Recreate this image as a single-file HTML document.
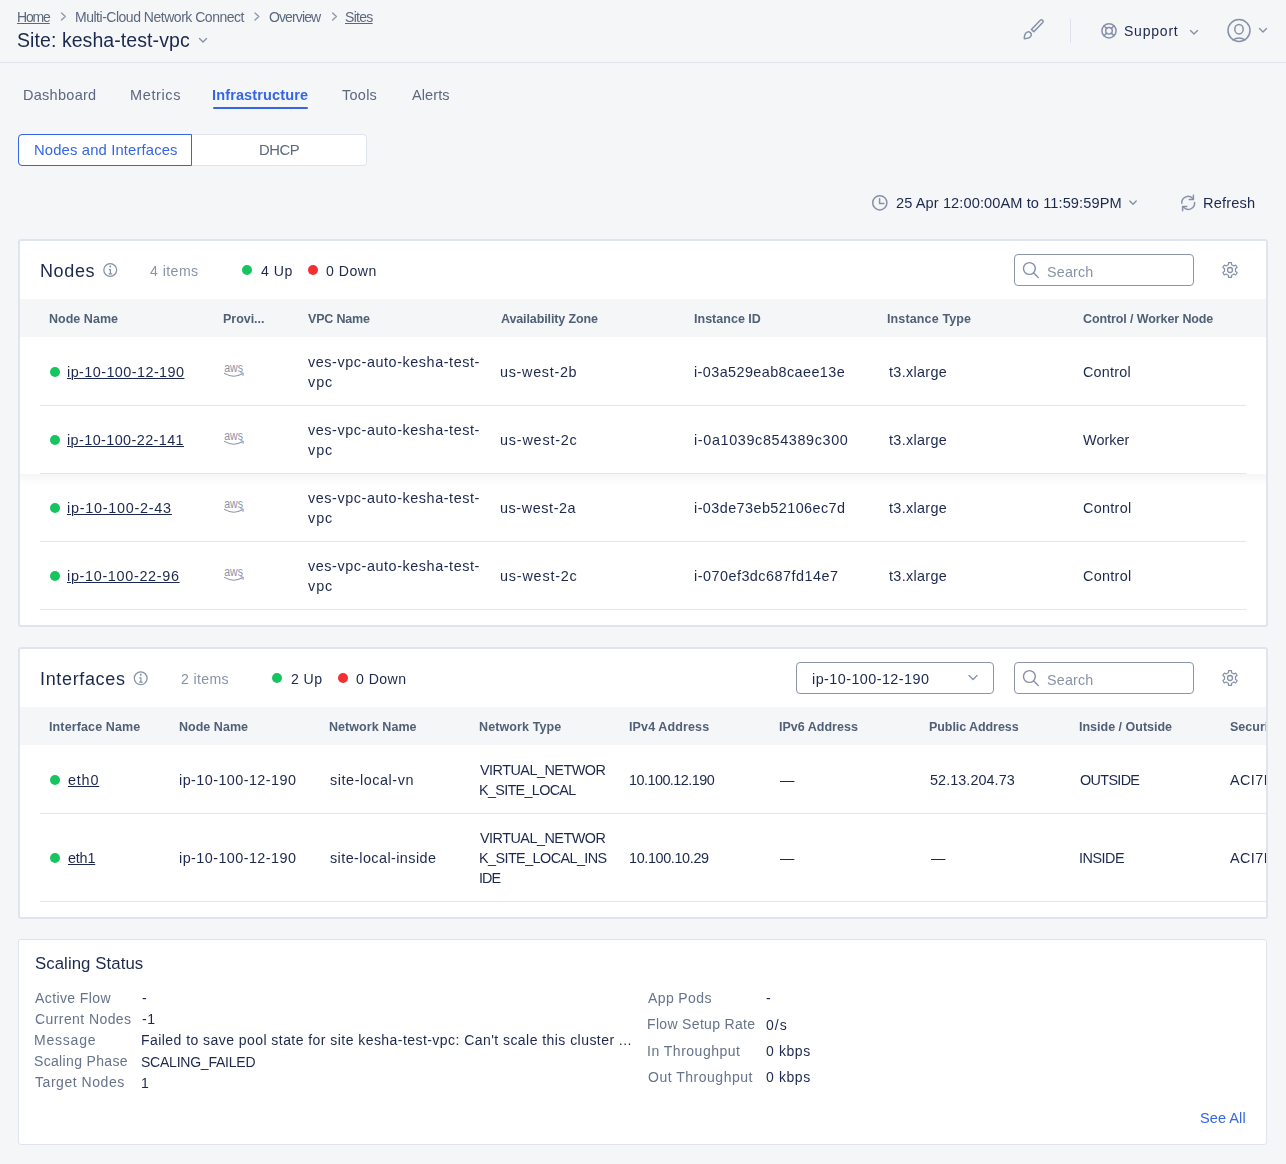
<!DOCTYPE html>
<html><head><meta charset="utf-8">
<style>
*{box-sizing:border-box;margin:0;padding:0}
html,body{width:1286px;height:1164px;overflow:hidden;background:#f5f6f8;font-family:"Liberation Sans",sans-serif}
.t{position:absolute;white-space:pre;line-height:20px;will-change:transform}
.b{position:absolute}
.card{position:absolute;background:#fff;border:2px solid #e0e4ee;border-radius:3px}
.sep{position:absolute;height:1px;background:#e2e6ef}
.dot{position:absolute;width:10px;height:10px;border-radius:50%}
.g{background:#16c55f}
.r{background:#f23030}
.box{position:absolute;border:1px solid #8a95aa;border-radius:4px;background:#fff}
svg{position:absolute;left:0;top:0}
</style></head><body>
<!-- header -->
<div class="b" style="left:0;top:62px;width:1286px;height:1px;background:#dfe3ec"></div>
<div class="b" style="left:1070px;top:19px;width:1px;height:24px;background:#dde2ec"></div>
<!-- tab underline -->
<div class="b" style="left:213px;top:107px;width:95px;height:2px;background:#3466e6;border-radius:1px"></div>
<!-- segmented -->
<div class="b" style="left:18px;top:134px;width:349px;height:32px;background:#fff;border:1px solid #dfe3ed;border-radius:4px"></div>
<div class="b" style="left:18px;top:134px;width:174px;height:32px;border:1px solid #3466e6;border-radius:4px 0 0 4px"></div>

<!-- nodes card -->
<div class="card" style="left:18px;top:239px;width:1250px;height:388px"></div>
<div class="b" style="left:20px;top:299px;width:1246px;height:38px;background:#f5f6f8"></div>
<div class="b" style="left:20px;top:474px;width:1246px;height:12px;background:linear-gradient(rgba(0,0,0,0.035),rgba(0,0,0,0))"></div>
<div class="sep" style="left:40px;top:405px;width:1206px"></div>
<div class="sep" style="left:40px;top:473px;width:1206px"></div>
<div class="sep" style="left:40px;top:541px;width:1206px"></div>
<div class="sep" style="left:40px;top:609px;width:1206px"></div>
<div class="dot g" style="left:242px;top:265px"></div>
<div class="dot r" style="left:308px;top:265px"></div>
<div class="dot g" style="left:50px;top:367px"></div>
<div class="dot g" style="left:50px;top:435px"></div>
<div class="dot g" style="left:50px;top:503px"></div>
<div class="dot g" style="left:50px;top:571px"></div>
<div class="box" style="left:1014px;top:254px;width:180px;height:32px"></div>

<!-- interfaces card -->
<div class="card" style="left:18px;top:647px;width:1250px;height:272px"></div>
<div class="b" style="left:20px;top:707px;width:1246px;height:38px;background:#f5f6f8"></div>
<div class="sep" style="left:40px;top:813px;width:1226px"></div>
<div class="sep" style="left:40px;top:901px;width:1226px"></div>
<div class="dot g" style="left:272px;top:673px"></div>
<div class="dot r" style="left:338px;top:673px"></div>
<div class="dot g" style="left:50px;top:775px"></div>
<div class="dot g" style="left:50px;top:853px"></div>
<div class="box" style="left:796px;top:662px;width:198px;height:32px"></div>
<div class="box" style="left:1014px;top:662px;width:180px;height:32px"></div>

<!-- scaling card -->
<div class="card" style="left:18px;top:939px;width:1249px;height:206px;border-width:1px"></div>

<svg width="1286" height="1164" viewBox="0 0 1286 1164" fill="none" stroke="#8591a6" stroke-width="1.4" stroke-linecap="round" stroke-linejoin="round">
  <!-- crumb chevrons -->
  <g stroke="#8d98ab" stroke-width="1.4">
  <polyline points="61.5,13 65.3,16.5 61.5,20"/>
  <polyline points="255,13 258.8,16.5 255,20"/>
  <polyline points="332.6,13 336.4,16.5 332.6,20"/>
  </g>
  <!-- title chevron -->
  <polyline points="199.5,38.5 203,42 206.5,38.5" stroke="#8591a6"/>
  <!-- brush -->
  <g stroke="#8591a6" stroke-width="1.5">
    <path d="M1031.4,29.4 L1040.3,20.2 A1.7,1.7 0 0 1 1042.7,22.6 L1033.8,31.8 Z"/>
    <path d="M1024.3,38.7 C1024.2,36 1024.8,33.3 1027.2,32.1 C1029.4,31.1 1032,33.4 1031.2,35.6 C1030.4,37.8 1027.4,38.7 1024.3,38.7 Z"/>
  </g>
  <!-- lifebuoy -->
  <g stroke-width="1.5">
    <circle cx="1109" cy="30.8" r="7.1"/>
    <circle cx="1109" cy="30.8" r="3.3"/>
    <path d="M1104,25.8 L1106.7,28.5 M1114,25.8 L1111.3,28.5 M1104,35.8 L1106.7,33.1 M1114,35.8 L1111.3,33.1"/>
  </g>
  <polyline points="1190.5,30.5 1194,34 1197.5,30.5"/>
  <!-- avatar -->
  <g stroke-width="1.5">
    <circle cx="1239" cy="30.5" r="11"/>
    <ellipse cx="1239" cy="29.2" rx="4.2" ry="4.8"/>
    <path d="M1233,39.8 Q1239,36.2 1245,39.8"/>
  </g>
  <polyline points="1259.5,28.5 1263,32 1266.5,28.5"/>
  <!-- clock -->
  <g stroke-width="1.5">
    <circle cx="879.8" cy="202.8" r="7.1"/>
    <path d="M879.6,198.8 V203.4 H883.9"/>
  </g>
  <polyline points="1129.8,201 1133,204.3 1136.2,201"/>
  <!-- refresh -->
  <g stroke-width="1.5">
    <path d="M1181.8,203.2 A6.3,6.3 0 0 1 1193,198.8"/>
    <path d="M1193.4,195.2 V199.6 H1189.2"/>
    <path d="M1194.6,202.6 A6.3,6.3 0 0 1 1183.6,207.2"/>
    <path d="M1182.6,210.8 V206.4 H1186.8"/>
  </g>
  <!-- info icons -->
  <g stroke-width="1.2">
    <circle cx="110.2" cy="270" r="6.4"/>
    <path d="M108.8,269.6 H110.4 V273.8 M108.6,273.8 H112.2" stroke-linecap="butt"/>
    <circle cx="140.7" cy="678.3" r="6.4"/>
    <path d="M139.3,677.9 H140.9 V682.1 M139.1,682.1 H142.7" stroke-linecap="butt"/>
  </g>
  <g fill="#8591a6" stroke="none">
    <circle cx="110.3" cy="266.5" r="0.95"/>
    <circle cx="140.8" cy="674.8" r="0.95"/>
  </g>
  <!-- search icons -->
  <g stroke-width="1.4">
    <circle cx="1029.4" cy="268.5" r="5.9"/>
    <path d="M1033.8,273 L1038.2,277.4"/>
    <circle cx="1029.4" cy="676.5" r="5.9"/>
    <path d="M1033.8,681 L1038.2,685.4"/>
  </g>
  <!-- gears -->
  <g stroke-width="1.3">
    <path transform="translate(1230,270) scale(0.94)" d="M-2.95,-5.11 L-1.72,-5.64 L-1.53,-7.85 L1.53,-7.85 L1.72,-5.64 L2.95,-5.11 L4.02,-4.31 L6.04,-5.25 L7.56,-2.60 L5.75,-1.33 L5.90,0.00 L5.75,1.33 L7.56,2.60 L6.04,5.25 L4.02,4.31 L2.95,5.11 L1.72,5.64 L1.53,7.85 L-1.53,7.85 L-1.72,5.64 L-2.95,5.11 L-4.02,4.31 L-6.04,5.25 L-7.56,2.60 L-5.75,1.33 L-5.90,-0.00 L-5.75,-1.33 L-7.56,-2.60 L-6.04,-5.25 L-4.02,-4.31 Z"/>
    <circle cx="1230" cy="270" r="2.5"/>
    <path transform="translate(1230,678) scale(0.94)" d="M-2.95,-5.11 L-1.72,-5.64 L-1.53,-7.85 L1.53,-7.85 L1.72,-5.64 L2.95,-5.11 L4.02,-4.31 L6.04,-5.25 L7.56,-2.60 L5.75,-1.33 L5.90,0.00 L5.75,1.33 L7.56,2.60 L6.04,5.25 L4.02,4.31 L2.95,5.11 L1.72,5.64 L1.53,7.85 L-1.53,7.85 L-1.72,5.64 L-2.95,5.11 L-4.02,4.31 L-6.04,5.25 L-7.56,2.60 L-5.75,1.33 L-5.90,-0.00 L-5.75,-1.33 L-7.56,-2.60 L-6.04,-5.25 L-4.02,-4.31 Z"/>
    <circle cx="1230" cy="678" r="2.5"/>
  </g>
  <!-- dropdown chevron -->
  <polyline points="969,675.5 973,679.5 977,675.5" stroke-width="1.3"/>
  <!-- aws logos -->
  <g id="aws">
    <text x="224.2" y="371.5" font-family="Liberation Sans" font-size="12.5" textLength="18.7" lengthAdjust="spacingAndGlyphs" fill="#8a94a8" stroke="none">aws</text>
    <path d="M224.5,373.4 Q233.5,378.8 242.4,373.8" stroke="#8a94a8" stroke-width="1.1"/>
    <path d="M240.8,372.6 L243.4,373.2 L243,375.6" stroke="#8a94a8" stroke-width="0.9"/>
  </g>
  <use href="#aws" y="68"/>
  <use href="#aws" y="136"/>
  <use href="#aws" y="204"/>
</svg>
<div class='t' style='left:17.30px;top:6.80px;font-size:14px;font-weight:400;color:#5c687e;letter-spacing:-1.167px;text-decoration:underline;text-decoration-thickness:1px;text-underline-offset:1px;'>Home</div>
<div class='t' style='left:74.60px;top:6.80px;font-size:14px;font-weight:400;color:#5c687e;letter-spacing:-0.485px;'>Multi-Cloud Network Connect</div>
<div class='t' style='left:269.00px;top:6.80px;font-size:14px;font-weight:400;color:#5c687e;letter-spacing:-0.886px;'>Overview</div>
<div class='t' style='left:345.30px;top:6.80px;font-size:14px;font-weight:400;color:#5c687e;letter-spacing:-0.700px;text-decoration:underline;text-decoration-thickness:1px;text-underline-offset:1px;'>Sites</div>
<div class='t' style='left:17.30px;top:30.30px;font-size:19.5px;font-weight:400;color:#1c284e;letter-spacing:0.074px;'>Site: kesha-test-vpc</div>
<div class='t' style='left:1124.20px;top:21.10px;font-size:14px;font-weight:400;color:#1c284e;letter-spacing:0.783px;'>Support</div>
<div class='t' style='left:22.60px;top:85.10px;font-size:14.5px;font-weight:400;color:#5c687e;letter-spacing:0.275px;'>Dashboard</div>
<div class='t' style='left:129.50px;top:85.10px;font-size:14.5px;font-weight:400;color:#5c687e;letter-spacing:0.617px;'>Metrics</div>
<div class='t' style='left:342.00px;top:85.10px;font-size:14.5px;font-weight:400;color:#5c687e;letter-spacing:0.250px;'>Tools</div>
<div class='t' style='left:411.70px;top:85.10px;font-size:14.5px;font-weight:400;color:#5c687e;letter-spacing:0.100px;'>Alerts</div>
<div class='t' style='left:212.20px;top:85.10px;font-size:14.5px;font-weight:700;color:#3466e6;letter-spacing:0.138px;'>Infrastructure</div>
<div class='t' style='left:33.50px;top:140.20px;font-size:14.8px;font-weight:400;color:#3466e6;letter-spacing:0.147px;'>Nodes and Interfaces</div>
<div class='t' style='left:258.70px;top:140.20px;font-size:14.8px;font-weight:400;color:#5c687e;letter-spacing:-0.467px;'>DHCP</div>
<div class='t' style='left:896.00px;top:193.00px;font-size:14.6px;font-weight:400;color:#1c284e;letter-spacing:0.093px;'>25 Apr 12:00:00AM to 11:59:59PM</div>
<div class='t' style='left:1203.30px;top:193.00px;font-size:14.6px;font-weight:400;color:#1c284e;letter-spacing:0.183px;'>Refresh</div>
<div class='t' style='left:40.20px;top:260.80px;font-size:18px;font-weight:400;color:#1c284e;letter-spacing:0.625px;'>Nodes</div>
<div class='t' style='left:150.00px;top:260.90px;font-size:14.1px;font-weight:400;color:#8893a8;letter-spacing:0.450px;'>4 items</div>
<div class='t' style='left:260.70px;top:260.90px;font-size:14.1px;font-weight:400;color:#1c284e;letter-spacing:0.500px;'>4 Up</div>
<div class='t' style='left:326.30px;top:260.90px;font-size:14.1px;font-weight:400;color:#1c284e;letter-spacing:0.500px;'>0 Down</div>
<div class='t' style='left:1046.50px;top:261.60px;font-size:14.3px;font-weight:400;color:#8893a8;letter-spacing:0.200px;'>Search</div>
<div class='t' style='left:49.40px;top:308.90px;font-size:12.5px;font-weight:700;color:#516076;letter-spacing:0.025px;'>Node Name</div>
<div class='t' style='left:222.60px;top:308.90px;font-size:12.5px;font-weight:700;color:#516076;letter-spacing:-0.029px;'>Provi...</div>
<div class='t' style='left:307.70px;top:308.90px;font-size:12.5px;font-weight:700;color:#516076;letter-spacing:-0.186px;'>VPC Name</div>
<div class='t' style='left:501.30px;top:308.90px;font-size:12.5px;font-weight:700;color:#516076;letter-spacing:-0.119px;'>Availability Zone</div>
<div class='t' style='left:693.80px;top:308.90px;font-size:12.5px;font-weight:700;color:#516076;letter-spacing:0.020px;'>Instance ID</div>
<div class='t' style='left:887.40px;top:308.90px;font-size:12.5px;font-weight:700;color:#516076;letter-spacing:0.133px;'>Instance Type</div>
<div class='t' style='left:1082.50px;top:308.90px;font-size:12.5px;font-weight:700;color:#516076;letter-spacing:-0.105px;'>Control / Worker Node</div>
<div class='t' style='left:66.90px;top:362.00px;font-size:14.4px;font-weight:400;color:#1c284e;letter-spacing:0.440px;text-decoration:underline;text-decoration-thickness:1px;text-underline-offset:1px;'>ip-10-100-12-190</div>
<div class='t' style='left:307.80px;top:352.00px;font-size:14.4px;font-weight:400;color:#1c284e;letter-spacing:0.565px;'>ves-vpc-auto-kesha-test-</div>
<div class='t' style='left:307.60px;top:372.00px;font-size:14.4px;font-weight:400;color:#1c284e;letter-spacing:0.950px;'>vpc</div>
<div class='t' style='left:500.30px;top:362.00px;font-size:14.4px;font-weight:400;color:#1c284e;letter-spacing:0.689px;'>us-west-2b</div>
<div class='t' style='left:694.30px;top:362.00px;font-size:14.4px;font-weight:400;color:#1c284e;letter-spacing:0.411px;'>i-03a529eab8caee13e</div>
<div class='t' style='left:888.50px;top:362.00px;font-size:14.4px;font-weight:400;color:#1c284e;letter-spacing:0.325px;'>t3.xlarge</div>
<div class='t' style='left:1082.70px;top:362.00px;font-size:14.4px;font-weight:400;color:#1c284e;letter-spacing:0.217px;'>Control</div>
<div class='t' style='left:66.90px;top:430.00px;font-size:14.4px;font-weight:400;color:#1c284e;letter-spacing:0.413px;text-decoration:underline;text-decoration-thickness:1px;text-underline-offset:1px;'>ip-10-100-22-141</div>
<div class='t' style='left:307.80px;top:420.00px;font-size:14.4px;font-weight:400;color:#1c284e;letter-spacing:0.565px;'>ves-vpc-auto-kesha-test-</div>
<div class='t' style='left:307.60px;top:440.00px;font-size:14.4px;font-weight:400;color:#1c284e;letter-spacing:0.950px;'>vpc</div>
<div class='t' style='left:500.30px;top:430.00px;font-size:14.4px;font-weight:400;color:#1c284e;letter-spacing:0.800px;'>us-west-2c</div>
<div class='t' style='left:694.30px;top:430.00px;font-size:14.4px;font-weight:400;color:#1c284e;letter-spacing:0.633px;'>i-0a1039c854389c300</div>
<div class='t' style='left:888.50px;top:430.00px;font-size:14.4px;font-weight:400;color:#1c284e;letter-spacing:0.325px;'>t3.xlarge</div>
<div class='t' style='left:1082.70px;top:430.00px;font-size:14.4px;font-weight:400;color:#1c284e;letter-spacing:0.060px;'>Worker</div>
<div class='t' style='left:66.90px;top:498.00px;font-size:14.4px;font-weight:400;color:#1c284e;letter-spacing:0.746px;text-decoration:underline;text-decoration-thickness:1px;text-underline-offset:1px;'>ip-10-100-2-43</div>
<div class='t' style='left:307.80px;top:488.00px;font-size:14.4px;font-weight:400;color:#1c284e;letter-spacing:0.565px;'>ves-vpc-auto-kesha-test-</div>
<div class='t' style='left:307.60px;top:508.00px;font-size:14.4px;font-weight:400;color:#1c284e;letter-spacing:0.950px;'>vpc</div>
<div class='t' style='left:500.30px;top:498.00px;font-size:14.4px;font-weight:400;color:#1c284e;letter-spacing:0.578px;'>us-west-2a</div>
<div class='t' style='left:694.30px;top:498.00px;font-size:14.4px;font-weight:400;color:#1c284e;letter-spacing:0.433px;'>i-03de73eb52106ec7d</div>
<div class='t' style='left:888.50px;top:498.00px;font-size:14.4px;font-weight:400;color:#1c284e;letter-spacing:0.325px;'>t3.xlarge</div>
<div class='t' style='left:1082.70px;top:498.00px;font-size:14.4px;font-weight:400;color:#1c284e;letter-spacing:0.300px;'>Control</div>
<div class='t' style='left:66.90px;top:566.00px;font-size:14.4px;font-weight:400;color:#1c284e;letter-spacing:0.679px;text-decoration:underline;text-decoration-thickness:1px;text-underline-offset:1px;'>ip-10-100-22-96</div>
<div class='t' style='left:307.80px;top:556.00px;font-size:14.4px;font-weight:400;color:#1c284e;letter-spacing:0.565px;'>ves-vpc-auto-kesha-test-</div>
<div class='t' style='left:307.60px;top:576.00px;font-size:14.4px;font-weight:400;color:#1c284e;letter-spacing:0.950px;'>vpc</div>
<div class='t' style='left:500.30px;top:566.00px;font-size:14.4px;font-weight:400;color:#1c284e;letter-spacing:0.800px;'>us-west-2c</div>
<div class='t' style='left:694.30px;top:566.00px;font-size:14.4px;font-weight:400;color:#1c284e;letter-spacing:0.483px;'>i-070ef3dc687fd14e7</div>
<div class='t' style='left:888.50px;top:566.00px;font-size:14.4px;font-weight:400;color:#1c284e;letter-spacing:0.325px;'>t3.xlarge</div>
<div class='t' style='left:1082.70px;top:566.00px;font-size:14.4px;font-weight:400;color:#1c284e;letter-spacing:0.300px;'>Control</div>
<div class='t' style='left:39.90px;top:668.80px;font-size:18px;font-weight:400;color:#1c284e;letter-spacing:0.656px;'>Interfaces</div>
<div class='t' style='left:180.60px;top:668.90px;font-size:14.1px;font-weight:400;color:#8893a8;letter-spacing:0.367px;'>2 items</div>
<div class='t' style='left:290.60px;top:668.90px;font-size:14.1px;font-weight:400;color:#1c284e;letter-spacing:0.400px;'>2 Up</div>
<div class='t' style='left:356.00px;top:668.90px;font-size:14.1px;font-weight:400;color:#1c284e;letter-spacing:0.460px;'>0 Down</div>
<div class='t' style='left:812.00px;top:668.50px;font-size:14.4px;font-weight:400;color:#1c284e;letter-spacing:0.433px;'>ip-10-100-12-190</div>
<div class='t' style='left:1046.50px;top:669.60px;font-size:14.3px;font-weight:400;color:#8893a8;letter-spacing:0.200px;'>Search</div>
<div class='t' style='left:49.40px;top:716.90px;font-size:12.5px;font-weight:700;color:#516076;letter-spacing:0.123px;'>Interface Name</div>
<div class='t' style='left:179.30px;top:716.90px;font-size:12.5px;font-weight:700;color:#516076;letter-spacing:0.025px;'>Node Name</div>
<div class='t' style='left:329.00px;top:716.90px;font-size:12.5px;font-weight:700;color:#516076;letter-spacing:0.064px;'>Network Name</div>
<div class='t' style='left:479.40px;top:716.90px;font-size:12.5px;font-weight:700;color:#516076;letter-spacing:0.109px;'>Network Type</div>
<div class='t' style='left:628.80px;top:716.90px;font-size:12.5px;font-weight:700;color:#516076;letter-spacing:0.127px;'>IPv4 Address</div>
<div class='t' style='left:779.40px;top:716.90px;font-size:12.5px;font-weight:700;color:#516076;letter-spacing:0.009px;'>IPv6 Address</div>
<div class='t' style='left:929.20px;top:716.90px;font-size:12.5px;font-weight:700;color:#516076;letter-spacing:-0.069px;'>Public Address</div>
<div class='t' style='left:1079.00px;top:716.90px;font-size:12.5px;font-weight:700;color:#516076;letter-spacing:0.000px;'>Inside / Outside</div>
<div class='t' style='left:1230.40px;top:716.90px;font-size:12.5px;font-weight:700;color:#516076;letter-spacing:0.020px;'>Security Group</div>
<div class='t' style='left:68.20px;top:770.00px;font-size:14.4px;font-weight:400;color:#1c284e;letter-spacing:0.800px;text-decoration:underline;text-decoration-thickness:1px;text-underline-offset:1px;'>eth0</div>
<div class='t' style='left:179.00px;top:770.00px;font-size:14.4px;font-weight:400;color:#1c284e;letter-spacing:0.433px;'>ip-10-100-12-190</div>
<div class='t' style='left:330.30px;top:770.00px;font-size:14.4px;font-weight:400;color:#1c284e;letter-spacing:0.558px;'>site-local-vn</div>
<div class='t' style='left:480.20px;top:760.00px;font-size:14.4px;font-weight:400;color:#1c284e;letter-spacing:-0.508px;'>VIRTUAL_NETWOR</div>
<div class='t' style='left:479.20px;top:780.00px;font-size:14.4px;font-weight:400;color:#1c284e;letter-spacing:-0.682px;'>K_SITE_LOCAL</div>
<div class='t' style='left:629.30px;top:770.00px;font-size:14.4px;font-weight:400;color:#1c284e;letter-spacing:-0.525px;'>10.100.12.190</div>
<div class='t' style='left:780.00px;top:770.00px;font-size:14.4px;font-weight:400;color:#1c284e;letter-spacing:0.000px;'>—</div>
<div class='t' style='left:929.50px;top:770.00px;font-size:14.4px;font-weight:400;color:#1c284e;letter-spacing:0.064px;'>52.13.204.73</div>
<div class='t' style='left:1080.40px;top:770.00px;font-size:14.4px;font-weight:400;color:#1c284e;letter-spacing:-0.667px;'>OUTSIDE</div>
<div class='t' style='left:1229.70px;top:770.00px;font-size:14.4px;font-weight:400;color:#1c284e;letter-spacing:0.433px;'>ACI7F000</div>
<div class='t' style='left:68.20px;top:848.00px;font-size:14.4px;font-weight:400;color:#1c284e;letter-spacing:-0.200px;text-decoration:underline;text-decoration-thickness:1px;text-underline-offset:1px;'>eth1</div>
<div class='t' style='left:179.00px;top:848.00px;font-size:14.4px;font-weight:400;color:#1c284e;letter-spacing:0.433px;'>ip-10-100-12-190</div>
<div class='t' style='left:330.30px;top:848.00px;font-size:14.4px;font-weight:400;color:#1c284e;letter-spacing:0.425px;'>site-local-inside</div>
<div class='t' style='left:480.20px;top:828.00px;font-size:14.4px;font-weight:400;color:#1c284e;letter-spacing:-0.508px;'>VIRTUAL_NETWOR</div>
<div class='t' style='left:479.20px;top:848.00px;font-size:14.4px;font-weight:400;color:#1c284e;letter-spacing:-0.573px;'>K_SITE_LOCAL_INS</div>
<div class='t' style='left:479.00px;top:868.00px;font-size:14.4px;font-weight:400;color:#1c284e;letter-spacing:-1.000px;'>IDE</div>
<div class='t' style='left:629.30px;top:848.00px;font-size:14.4px;font-weight:400;color:#1c284e;letter-spacing:-0.364px;'>10.100.10.29</div>
<div class='t' style='left:780.00px;top:848.00px;font-size:14.4px;font-weight:400;color:#1c284e;letter-spacing:0.000px;'>—</div>
<div class='t' style='left:930.50px;top:848.00px;font-size:14.4px;font-weight:400;color:#1c284e;letter-spacing:0.000px;'>—</div>
<div class='t' style='left:1079.40px;top:848.00px;font-size:14.4px;font-weight:400;color:#1c284e;letter-spacing:-0.480px;'>INSIDE</div>
<div class='t' style='left:1229.70px;top:848.00px;font-size:14.4px;font-weight:400;color:#1c284e;letter-spacing:0.433px;'>ACI7F000</div>
<div class='t' style='left:34.50px;top:954.10px;font-size:16.8px;font-weight:400;color:#1c284e;letter-spacing:0.069px;'>Scaling Status</div>
<div class='t' style='left:35.00px;top:988.00px;font-size:14px;font-weight:400;color:#66738a;letter-spacing:0.400px;'>Active Flow</div>
<div class='t' style='left:35.00px;top:1008.90px;font-size:14px;font-weight:400;color:#66738a;letter-spacing:0.417px;'>Current Nodes</div>
<div class='t' style='left:34.00px;top:1029.80px;font-size:14px;font-weight:400;color:#66738a;letter-spacing:0.783px;'>Message</div>
<div class='t' style='left:34.00px;top:1051.30px;font-size:14px;font-weight:400;color:#66738a;letter-spacing:0.333px;'>Scaling Phase</div>
<div class='t' style='left:35.00px;top:1072.20px;font-size:14px;font-weight:400;color:#66738a;letter-spacing:0.545px;'>Target Nodes</div>
<div class='t' style='left:142.40px;top:988.30px;font-size:14px;font-weight:400;color:#1c284e;letter-spacing:0.000px;'>-</div>
<div class='t' style='left:142.40px;top:1009.20px;font-size:14px;font-weight:400;color:#1c284e;letter-spacing:0.600px;'>-1</div>
<div class='t' style='left:141.40px;top:1030.10px;font-size:14px;font-weight:400;color:#1c284e;letter-spacing:0.447px;'>Failed to save pool state for site kesha-test-vpc: Can&#x27;t scale this cluster ...</div>
<div class='t' style='left:141.40px;top:1051.60px;font-size:14px;font-weight:400;color:#1c284e;letter-spacing:-0.231px;'>SCALING_FAILED</div>
<div class='t' style='left:141.40px;top:1072.50px;font-size:14px;font-weight:400;color:#1c284e;letter-spacing:0.000px;'>1</div>
<div class='t' style='left:648.20px;top:988.00px;font-size:14px;font-weight:400;color:#66738a;letter-spacing:0.386px;'>App Pods</div>
<div class='t' style='left:647.20px;top:1014.30px;font-size:14px;font-weight:400;color:#66738a;letter-spacing:0.329px;'>Flow Setup Rate</div>
<div class='t' style='left:647.20px;top:1040.60px;font-size:14px;font-weight:400;color:#66738a;letter-spacing:0.500px;'>In Throughput</div>
<div class='t' style='left:648.20px;top:1066.80px;font-size:14px;font-weight:400;color:#66738a;letter-spacing:0.508px;'>Out Throughput</div>
<div class='t' style='left:766.00px;top:988.30px;font-size:14px;font-weight:400;color:#1c284e;letter-spacing:0.000px;'>-</div>
<div class='t' style='left:766.00px;top:1014.60px;font-size:14px;font-weight:400;color:#1c284e;letter-spacing:1.000px;'>0/s</div>
<div class='t' style='left:766.00px;top:1040.90px;font-size:14px;font-weight:400;color:#1c284e;letter-spacing:0.600px;'>0 kbps</div>
<div class='t' style='left:766.00px;top:1067.10px;font-size:14px;font-weight:400;color:#1c284e;letter-spacing:0.600px;'>0 kbps</div>
<div class='t' style='left:1200.10px;top:1108.10px;font-size:14.5px;font-weight:400;color:#3466e6;letter-spacing:0.083px;'>See All</div>
<div class="b" style="left:1266px;top:649px;width:2px;height:268px;background:#e0e4ee"></div>
<div class="b" style="left:1268px;top:640px;width:18px;height:290px;background:#f5f6f8"></div>
</body></html>
